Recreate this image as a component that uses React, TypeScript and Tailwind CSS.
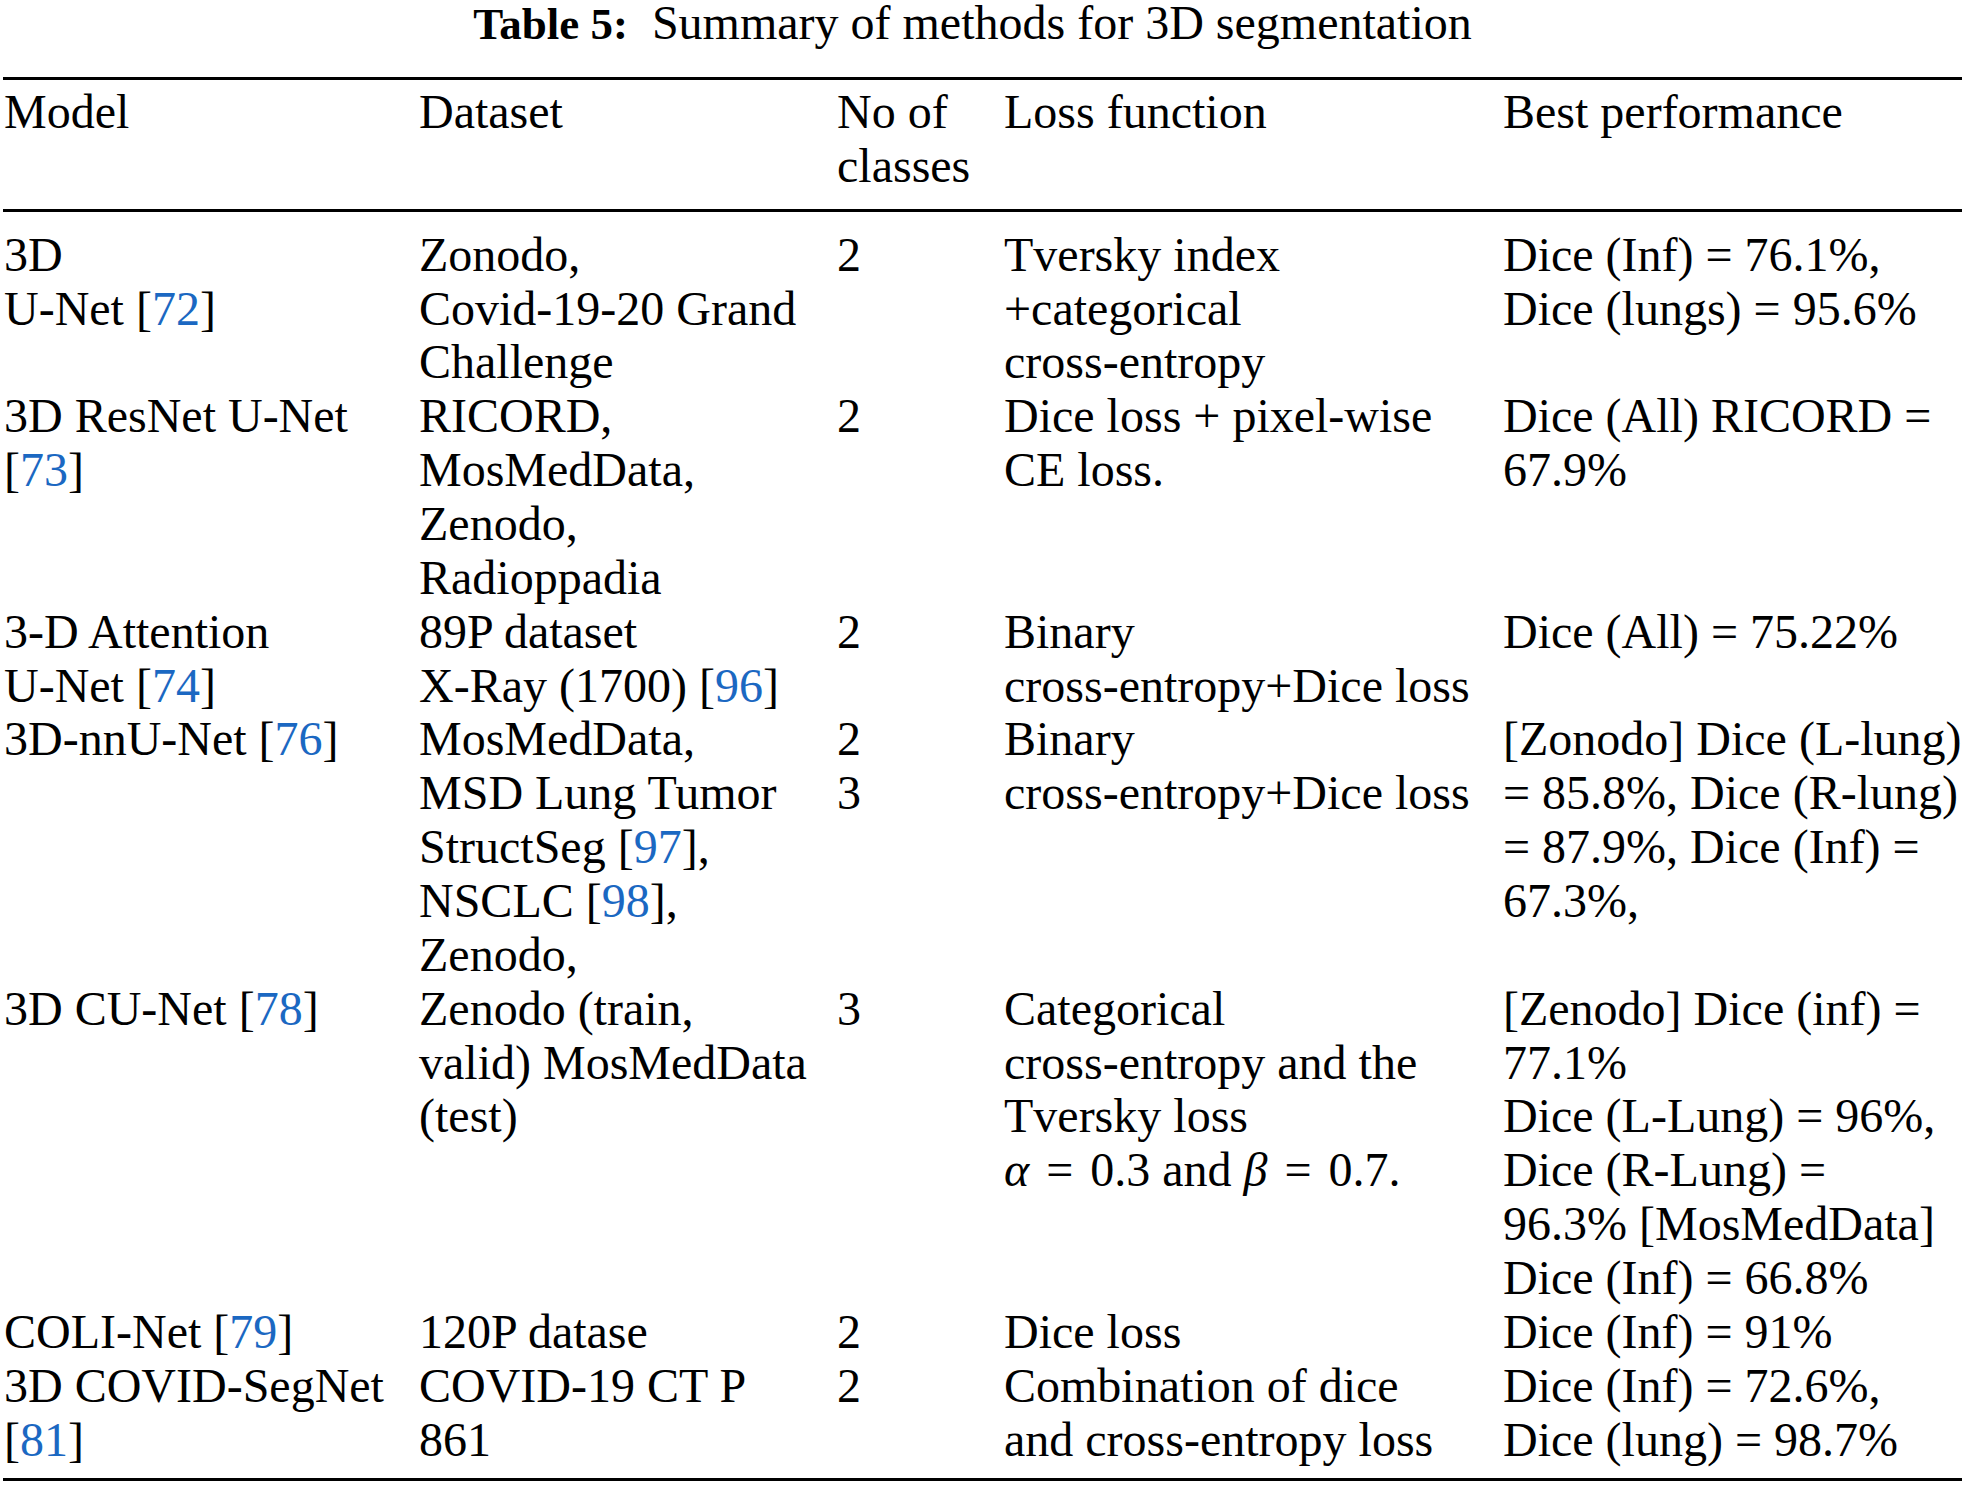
import React from "react";

type Line = React.ReactNode;

type Row = {
  model: Line[];
  dataset: Line[];
  classes: Line[];
  loss: Line[];
  best: Line[];
};

function Cite({ n }: { n: number }) {
  return (
    <>
      [<span className="text-[#1b68c2]">{n}</span>]
    </>
  );
}

const rows: Row[] = [
  {
    model: ["3D", <>U-Net <Cite n={72} /></>],
    dataset: ["Zonodo,", "Covid-19-20 Grand", "Challenge"],
    classes: ["2"],
    loss: ["Tversky index", "+categorical", "cross-entropy"],
    best: ["Dice (Inf) = 76.1%,", "Dice (lungs) = 95.6%"],
  },
  {
    model: ["3D ResNet U-Net", <Cite n={73} />],
    dataset: ["RICORD,", "MosMedData,", "Zenodo,", "Radioppadia"],
    classes: ["2"],
    loss: ["Dice loss + pixel-wise", "CE loss."],
    best: ["Dice (All) RICORD =", "67.9%"],
  },
  {
    model: ["3-D Attention", <>U-Net <Cite n={74} /></>],
    dataset: ["89P dataset", <>X-Ray (1700) <Cite n={96} /></>],
    classes: ["2"],
    loss: ["Binary", "cross-entropy+Dice loss"],
    best: ["Dice (All) = 75.22%"],
  },
  {
    model: [<>3D-nnU-Net <Cite n={76} /></>],
    dataset: [
      "MosMedData,",
      "MSD Lung Tumor",
      <>StructSeg <Cite n={97} />,</>,
      <>NSCLC <Cite n={98} />,</>,
      "Zenodo,",
    ],
    classes: ["2", "3"],
    loss: ["Binary", "cross-entropy+Dice loss"],
    best: [
      "[Zonodo] Dice (L-lung)",
      "= 85.8%, Dice (R-lung)",
      "= 87.9%, Dice (Inf) =",
      "67.3%,",
    ],
  },
  {
    model: [<>3D CU-Net <Cite n={78} /></>],
    dataset: ["Zenodo (train,", "valid) MosMedData", "(test)"],
    classes: ["3"],
    loss: [
      "Categorical",
      "cross-entropy and the",
      "Tversky loss",
      <>
        <i>α</i>
        <span className="mx-[5px]"> = </span>0.3 and <i>β</i>
        <span className="mx-[5px]"> = </span>0.7.
      </>,
    ],
    best: [
      "[Zenodo] Dice (inf) =",
      "77.1%",
      "Dice (L-Lung) = 96%,",
      "Dice (R-Lung) =",
      "96.3% [MosMedData]",
      "Dice (Inf) = 66.8%",
    ],
  },
  {
    model: [<>COLI-Net <Cite n={79} /></>],
    dataset: ["120P datase"],
    classes: ["2"],
    loss: ["Dice loss"],
    best: ["Dice (Inf) = 91%"],
  },
  {
    model: ["3D COVID-SegNet", <Cite n={81} />],
    dataset: ["COVID-19 CT P", "861"],
    classes: ["2"],
    loss: ["Combination of dice", "and cross-entropy loss"],
    best: ["Dice (Inf) = 72.6%,", "Dice (lung) = 98.7%"],
  },
];

function Cell({ lines }: { lines: Line[] }) {
  return (
    <div>
      {lines.map((l, i) => (
        <div key={i} className="whitespace-nowrap">
          {l}
        </div>
      ))}
    </div>
  );
}

export default function App() {
  const cols = "grid grid-cols-[415px_418px_167px_499px_1fr] pl-[1px]";
  return (
    <div className="w-[1967px] h-[1487px] overflow-hidden bg-white text-black font-['Liberation_Serif',serif] text-[48px]">
      <div className="ml-[3px] w-[1959px]">
        <p className="pr-[20px] text-center leading-[45px]">
          <span className="font-bold text-[45px]">Table 5:</span>
          {"\u00a0 "}Summary of methods for 3D segmentation
        </p>
        <div className="mt-[30px] border-t-[3px] border-black" />
        <div className={`${cols} pt-[5px] pb-[16px] leading-[53.86px]`}>
          <div>Model</div>
          <div>Dataset</div>
          <div>
            No of
            <br />
            classes
          </div>
          <div>Loss function</div>
          <div>Best performance</div>
        </div>
        <div className="border-t-[3px] border-black" />
        <div className="pt-[16px] pb-[12px] leading-[53.86px]">
          {rows.map((r, i) => (
            <div key={i} className={cols}>
              <Cell lines={r.model} />
              <Cell lines={r.dataset} />
              <Cell lines={r.classes} />
              <Cell lines={r.loss} />
              <Cell lines={r.best} />
            </div>
          ))}
        </div>
        <div className="border-t-[3px] border-black" />
      </div>
    </div>
  );
}
